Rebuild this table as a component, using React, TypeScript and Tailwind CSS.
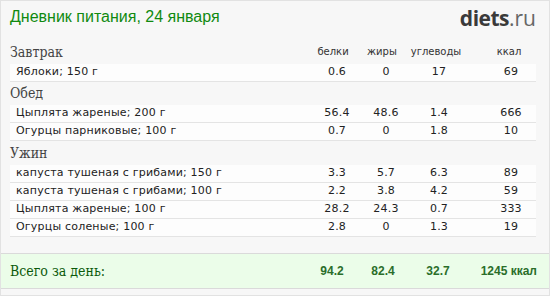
import React from 'react';

type Item = { name: string; p: string; f: string; c: string; k: string };

const meals: { title: string; h: string; items: Item[] }[] = [
  {
    title: 'Завтрак',
    h: 'h-[24px]',
    items: [{ name: 'Яблоки; 150 г', p: '0.6', f: '0', c: '17', k: '69' }],
  },
  {
    title: 'Обед',
    h: 'h-[23px]',
    items: [
      { name: 'Цыплята жареные; 200 г', p: '56.4', f: '48.6', c: '1.4', k: '666' },
      { name: 'Огурцы парниковые; 100 г', p: '0.7', f: '0', c: '1.8', k: '10' },
    ],
  },
  {
    title: 'Ужин',
    h: 'h-[24px]',
    items: [
      { name: 'капуста тушеная с грибами; 150 г', p: '3.3', f: '5.7', c: '6.3', k: '89' },
      { name: 'капуста тушеная с грибами; 100 г', p: '2.2', f: '3.8', c: '4.2', k: '59' },
      { name: 'Цыплята жареные; 100 г', p: '28.2', f: '24.3', c: '0.7', k: '333' },
      { name: 'Огурцы соленые; 100 г', p: '2.8', f: '0', c: '1.3', k: '19' },
    ],
  },
];

// name | белки | жиры | углеводы | ккал
const grid = 'grid grid-cols-[1fr_50px_48px_58px_68px]';
const serif = "font-['DejaVu_Serif',serif] font-stretch-condensed";

export default function App() {
  return (
    <div className="w-[550px] h-[296px] bg-[#f7f7f7] border border-[#e2e2e2] flex flex-col overflow-hidden">
      <div className="h-[39px] flex items-start justify-between pl-[9px] pr-[13px] pt-[5px]">
        <h1 className="text-[16px] leading-[22px] text-[#108a10] font-['Liberation_Sans',sans-serif]">
          Дневник питания, 24 января
        </h1>
        <div className="text-[21px] leading-[24px] font-['Open_Sans',sans-serif] text-[#3a3a3a]">
          <span className="font-bold tracking-[-0.5px]">diets</span>
          <span className="text-[#666]">.ru</span>
        </div>
      </div>

      <div className="pl-[9px] pr-[13px]">
        {meals.map((m, i) => (
          <div key={m.title}>
            <div className={`${grid} ${m.h} items-end pb-[3px]`}>
              <div className={`text-[14px] leading-[18px] text-[#444] ${serif}`}>{m.title}</div>
              {i === 0 && (
                <>
                  <div className="text-center pr-[8px] text-[10px] leading-[14px] pb-[2px] text-[#333] font-['DejaVu_Sans',sans-serif]">белки</div>
                  <div className="text-center pr-[8px] text-[10px] leading-[14px] pb-[2px] text-[#333] font-['DejaVu_Sans',sans-serif]">жиры</div>
                  <div className="text-center pr-[6px] text-[10px] leading-[14px] pb-[2px] text-[#333] font-['DejaVu_Sans',sans-serif]">углеводы</div>
                  <div className="text-center pl-[14px] text-[10px] leading-[14px] pb-[2px] text-[#333] font-['DejaVu_Sans',sans-serif]">ккал</div>
                </>
              )}
            </div>
            {m.items.map(it => (
              <div
                key={it.name}
                className={`${grid} h-[18px] items-center bg-[#fdfdfd] border-b border-[#e4e4e4] text-[11px] tracking-[0.2px] text-[#222] font-['DejaVu_Sans',sans-serif]`}
              >
                <div className="pl-[6px] whitespace-nowrap">{it.name}</div>
                <div className="text-center">{it.p}</div>
                <div className="text-center">{it.f}</div>
                <div className="text-center">{it.c}</div>
                <div className="text-center pl-[18px]">{it.k}</div>
              </div>
            ))}
          </div>
        ))}
      </div>

      <div className="mt-[16px] h-[36px] bg-[#ebfde9] border-t border-b border-[#dadada] pl-[9px] pr-[12px]">
        <div className={`${grid} h-full items-center text-[12px] font-bold text-[#2a6e2a] font-['Liberation_Sans',sans-serif]`}>
          <div className={`text-[14px] font-normal text-[#0b5a0b] ${serif}`}>Всего за день:</div>
          <div className="text-center pr-[12px]">94.2</div>
          <div className="text-center pr-[8px]">82.4</div>
          <div className="text-center pr-[4px]">32.7</div>
          <div className="text-right whitespace-nowrap">1245 ккал</div>
        </div>
      </div>
    </div>
  );
}
